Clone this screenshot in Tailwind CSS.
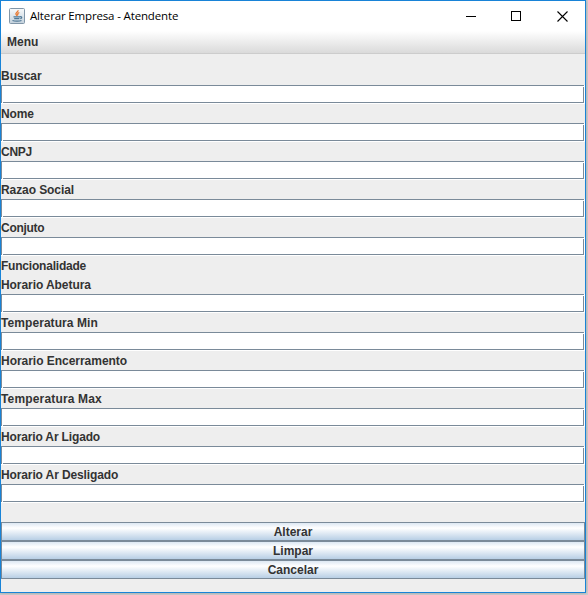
<!DOCTYPE html>
<html lang="pt">
<head>
<meta charset="utf-8">
<title>Alterar Empresa - Atendente</title>
<script src="https://cdn.jsdelivr.net/npm/@tailwindcss/browser@4"></script>
</head>
<body class="w-[588px] h-[595px] overflow-hidden bg-[#cecece] font-['Liberation_Sans',Arial,sans-serif] text-[#333333]">
<div class="w-[586px] h-[593px] border border-[#1883d7] bg-[#eeeeee] flex flex-col shadow-[0_0_3px_#999]">
  <header class="h-[30px] shrink-0 bg-white flex items-center pl-2">
    <svg class="w-4 h-4 shrink-0" viewBox="0 0 16 16" fill="none">
      <defs><linearGradient id="g" x1="0" y1="0" x2="0" y2="1"><stop offset="0" stop-color="#f8fafb"/><stop offset="1" stop-color="#c3d1dc"/></linearGradient></defs>
      <rect x=".5" y=".5" width="15" height="15" rx="1" fill="url(#g)" stroke="#8196a8"/>
      <path d="M9 2.200c.6 1.700-3 2.500-2 4.200.4.700 1 1.100 1 1.600M10.300 4.500C8.500 5.400 8.300 6 9 7.300" stroke="#e8772e" stroke-width="1.300"/>
      <path d="M4.500 8.800h6.500M5.200 10.600h5.200M11 8.800c2.200-.6 2.400 1.200.3 2M3.500 12.500c2 .9 7 .9 9 0" stroke="#4f7896" stroke-width="1.200"/>
    </svg>
    <h1 class="ml-[5px] text-[11.5px] leading-4 text-black font-['Open_Sans','Noto_Sans',sans-serif] tracking-[-0.15px] whitespace-nowrap">Alterar Empresa - Atendente</h1>
    <div class="ml-auto mr-[17px] flex items-start h-[11px]">
      <svg class="w-[10px] h-[10px] mr-[35px]" viewBox="0 0 10 10" shape-rendering="crispEdges"><path d="M0 5.500h10" stroke="#000"/></svg>
      <svg class="w-[10px] h-[10px] mr-[36px]" viewBox="0 0 10 10" shape-rendering="crispEdges"><rect x=".5" y=".5" width="9" height="9" fill="none" stroke="#000"/></svg>
      <svg class="w-[11px] h-[11px]" viewBox="0 0 11 11"><path d="M.5.5l10 10M10.500.5l-10 10" stroke="#000" stroke-width="1.100"/></svg>
    </div>
  </header>
  <nav class="h-[23px] shrink-0 border-b border-[#cccccc] bg-linear-to-b from-white to-[#dadada] pl-[6px] text-[12px] leading-[22px] font-bold">Menu</nav>
  <main id="form" class="mt-[12px] flex flex-col text-[12px] font-bold"></main>
  <div id="buttons" class="mt-[19px] flex flex-col text-[12px] font-bold"></div>
</div>
<script>
const rows = [["Buscar",0],["Nome",-0.1],["CNPJ",-0.25],["Razao Social",-0.08],["Conjuto",-0.28],["Funcionalidade",-0.21],["Horario Abetura",-0.07],["Temperatura Min",0.07],["Horario Encerramento",-0.03],["Temperatura Max",0.16],["Horario Ar Ligado",-0.15],["Horario Ar Desligado",-0.12]];
document.getElementById("form").innerHTML = rows.map(([t, s]) =>
  `<label class="h-[19px] pt-px leading-[19px] whitespace-nowrap" style="letter-spacing:${s}px">${t}</label>` +
  (t === "Funcionalidade" ? "" : `<div class="h-[19px] bg-white pr-px pb-px"><div class="relative h-[18px] border border-[#7a8a99]"><i class="absolute left-0 -bottom-px w-px h-px bg-white"></i><i class="absolute top-0 -right-px w-px h-px bg-white"></i></div></div>`)).join("");
document.getElementById("buttons").innerHTML = ["Alterar","Limpar","Cancelar"].map(t =>
  `<button class="h-[19px] border border-[#7a8a99] bg-linear-to-b from-[#dde8f3] via-white via-30% to-[#b8cfe5] text-center leading-[17px]"><span class="relative top-px">${t}</span></button>`).join("");
</script>
</body>
</html>
